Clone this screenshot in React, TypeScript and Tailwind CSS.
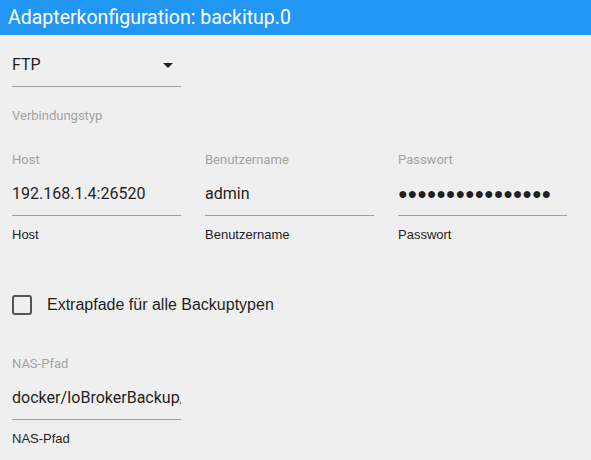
import { useState } from "react";

const roboto = { fontFamily: "Roboto, 'Liberation Sans', sans-serif" };
const arial = { fontFamily: "'Liberation Sans', Arial, sans-serif" };

function Field({ label, value, helper, password }: { label: string; value: string; helper: string; password?: boolean }) {
  return (
    <div className="w-[169px]">
      <div className="text-[13px] leading-[14px] text-[#a3a3a3]" style={roboto}>{label}</div>
      <div className="mt-[17px] h-[20px] text-[16px] leading-[20px] text-[#1f1f1f] whitespace-nowrap overflow-hidden" style={password ? arial : roboto}>
        {password ? <span className="text-[16px] tracking-[-0.1px]">{value}</span> : value}
      </div>
      <div className="mt-[11px] h-px bg-[#9e9e9e]" />
      <div className="mt-[12px] text-[13px] leading-[14px] text-[#1f1f1f]" style={arial}>{helper}</div>
    </div>
  );
}

export default function App() {
  const [checked, setChecked] = useState(false);

  return (
    <div className="w-[591px] h-[460px] bg-[#efefef] overflow-hidden">
      <div className="h-[35px] bg-[#2196f3] px-[8px] flex items-center text-white text-[19.5px]" style={roboto}>
        Adapterkonfiguration: backitup.0
      </div>

      <div className="pl-[12px]">
        {/* Verbindungstyp */}
        <div className="w-[169px] mt-[20px]">
          <div className="h-[20px] flex items-center justify-between text-[16px] text-[#1f1f1f]" style={roboto}>
            <span>FTP</span>
            <svg width="10" height="5" viewBox="0 0 10 5" className="mr-[8px]">
              <path d="M0 0h10L5 5z" fill="#222" />
            </svg>
          </div>
          <div className="mt-[11px] h-px bg-[#9e9e9e]" />
        </div>
        <div className="mt-[22px] text-[13px] leading-[14px] text-[#a3a3a3]" style={roboto}>Verbindungstyp</div>

        <div className="mt-[30px] flex gap-[24px]">
          <Field label="Host" value="192.168.1.4:26520" helper="Host" />
          <Field label="Benutzername" value="admin" helper="Benutzername" />
          <Field label="Passwort" value="●●●●●●●●●●●●●●●●" helper="Passwort" password />
        </div>

        <label className="mt-[51px] flex items-center gap-[15px] cursor-pointer" style={arial}>
          <span
            onClick={() => setChecked(!checked)}
            className="w-[20px] h-[20px] rounded-[3px] border-2 border-[#555] flex items-center justify-center"
          >
            {checked && <span className="w-[10px] h-[10px] bg-[#555]" />}
          </span>
          <span className="text-[16px] text-[#1f1f1f]">Extrapfade für alle Backuptypen</span>
        </label>

        <div className="mt-[40px]">
          <Field label="NAS-Pfad" value="docker/IoBrokerBackup/" helper="NAS-Pfad" />
        </div>
      </div>
    </div>
  );
}
